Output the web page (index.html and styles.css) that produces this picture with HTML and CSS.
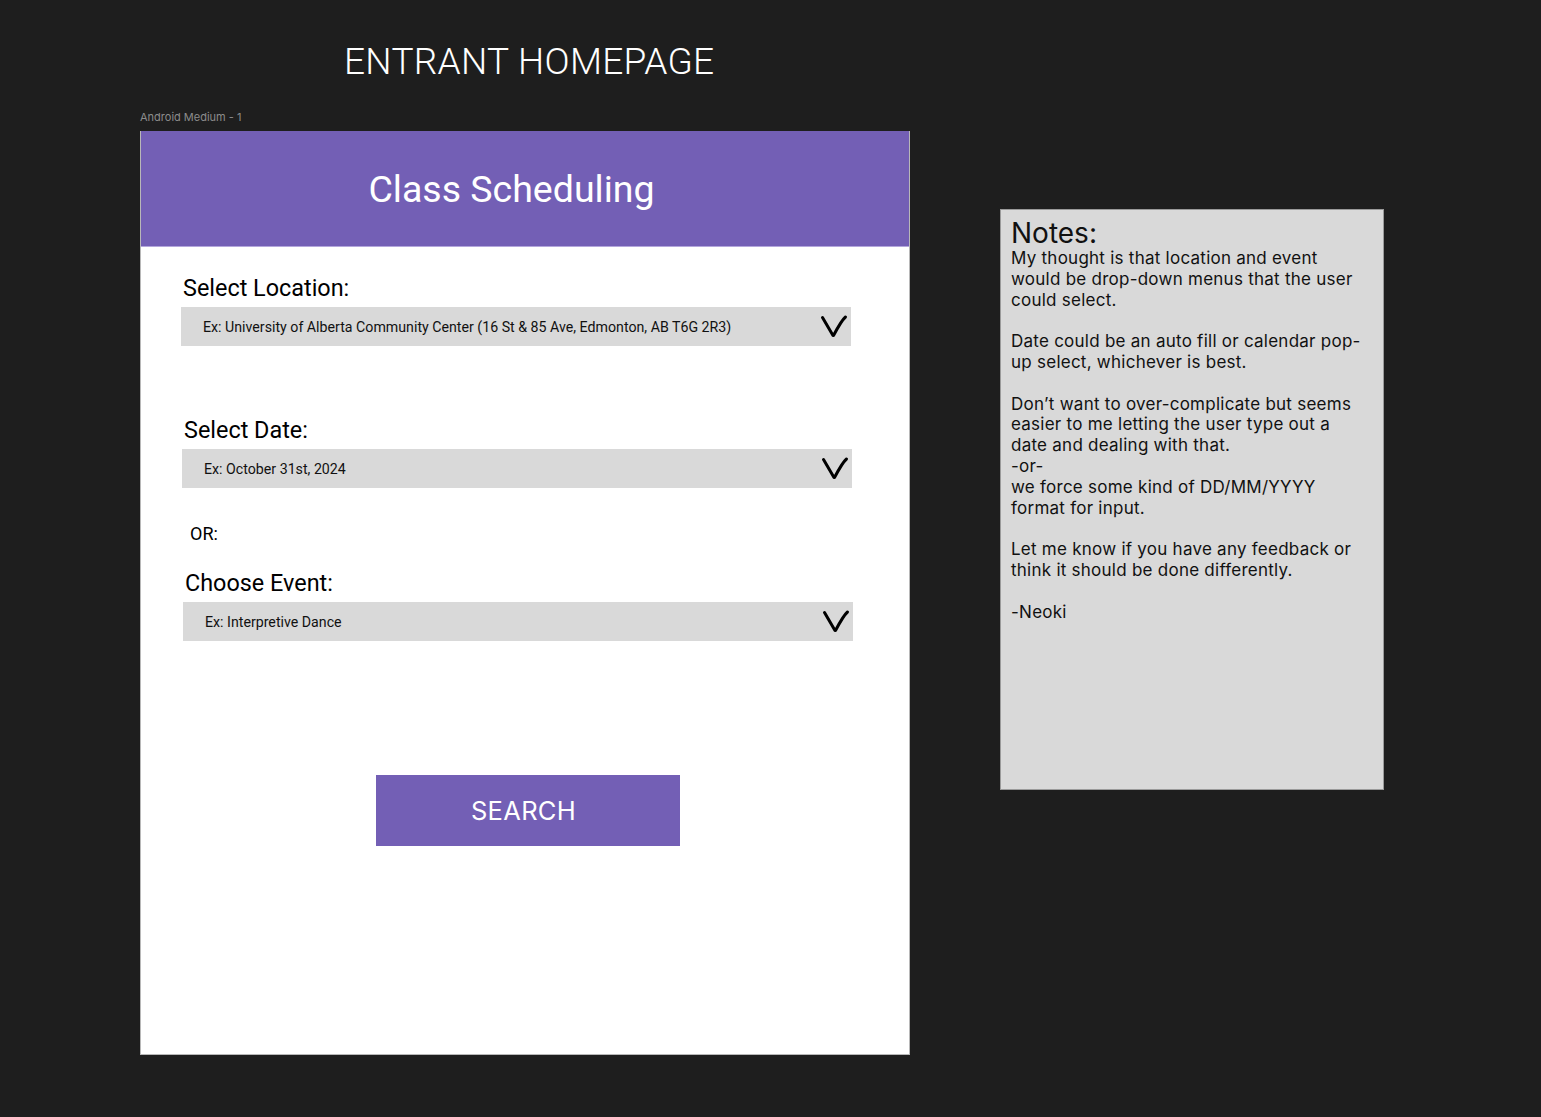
FILE: index.html
```html
<!DOCTYPE html>
<html>
<head>
<meta charset="utf-8">
<link rel="stylesheet" href="styles.css">
</head>
<body>
<div class="page">
  <h1 class="page-title">ENTRANT HOMEPAGE</h1>
  <div class="canvas">
    <div class="frame-col">
      <div class="frame-label">Android Medium - 1</div>
      <div class="frame">
        <div class="app-bar">Class Scheduling</div>
        <div class="form">
          <div class="field field-location">
            <div class="label">Select Location:</div>
            <div class="dropdown">
              <span>Ex: University of Alberta Community Center (16 St &amp; 85 Ave, Edmonton, AB T6G 2R3)</span>
              <svg class="chev" width="28" height="24" viewBox="0 0 28 24"><path d="M2.5 3.5 C4 6 8 13 13 21.5 L13.5 21.5 C18 13 22 6 25.5 3" fill="none" stroke="#000" stroke-width="3" stroke-linecap="round" stroke-linejoin="round"/></svg>
            </div>
          </div>
          <div class="field field-date">
            <div class="label">Select Date:</div>
            <div class="dropdown">
              <span>Ex: October 31st, 2024</span>
              <svg class="chev" width="28" height="24" viewBox="0 0 28 24"><path d="M2.5 3.5 C4 6 8 13 13 21.5 L13.5 21.5 C18 13 22 6 25.5 3" fill="none" stroke="#000" stroke-width="3" stroke-linecap="round" stroke-linejoin="round"/></svg>
            </div>
          </div>
          <div class="or">OR:</div>
          <div class="field field-event">
            <div class="label">Choose Event:</div>
            <div class="dropdown">
              <span>Ex: Interpretive Dance</span>
              <svg class="chev" width="28" height="24" viewBox="0 0 28 24"><path d="M2.5 3.5 C4 6 8 13 13 21.5 L13.5 21.5 C18 13 22 6 25.5 3" fill="none" stroke="#000" stroke-width="3" stroke-linecap="round" stroke-linejoin="round"/></svg>
            </div>
          </div>
          <div class="search-wrap">
            <button class="search">SEARCH</button>
          </div>
        </div>
      </div>
    </div>
    <div class="notes">
      <div class="notes-title">Notes:</div>
      <p>My thought is that location and event would be drop-down menus that the user could select.</p>
      <p>Date could be an auto fill or calendar pop-up select, whichever is best.</p>
      <p>Don’t want to over-complicate but seems easier to me letting the user type out a date and dealing with that.<br>-or-<br>we force some kind of DD/MM/YYYY format for input.</p>
      <p>Let me know if you have any feedback or think it should be done differently.</p>
      <p>-Neoki</p>
    </div>
  </div>
</div>
</body>
</html>
```

FILE: styles.css
```css
html, body {
  margin: 0;
  padding: 0;
  background: #1e1e1e;
  width: 1541px;
  height: 1117px;
  overflow: hidden;
}
.page {
  font-family: Roboto, "Liberation Sans", sans-serif;
}
.page-title {
  margin: 0;
  padding: 40px 0 0 344px;
  height: 44px;
  font-family: Roboto, sans-serif;
  font-weight: 300;
  font-size: 37px;
  line-height: 44px;
  color: #fff;
  letter-spacing: 0.3px;
}
.canvas {
  display: flex;
  align-items: flex-start;
  padding-left: 140px;
  margin-top: 26px;
}
.frame-col {
  width: 770px;
}
.frame-label {
  font-family: Inter, sans-serif;
  font-size: 11px;
  line-height: 14px;
  color: #8c8c8c;
  height: 21px;
}
.frame {
  background: #fff;
  height: 924px;
  box-sizing: border-box;
  border: 1px solid #b8b8b8;
  border-top: none;
}
.app-bar {
  height: 116px;
  background: #735fb5;
  border-bottom: 1px solid #b3a6dc;
  box-sizing: border-box;
  color: #fff;
  font-family: Roboto, sans-serif;
  font-size: 37.5px;
  display: flex;
  align-items: center;
  justify-content: center;
  padding-right: 27px;
  padding-top: 0;
}
.form {
  padding-left: 40px;
  padding-top: 27px;
}
.label {
  font-family: Roboto, sans-serif;
  font-size: 23.4px;
  line-height: 28px;
  color: #000;
  padding-left: 2px;
  margin-bottom: 5px;
}
.dropdown {
  width: 670px;
  height: 39px;
  background: #d9d9d9;
  display: flex;
  align-items: center;
  justify-content: space-between;
  box-sizing: border-box;
  padding-left: 22px;
  padding-right: 3px;
  font-family: Roboto, sans-serif;
  font-size: 14.2px;
  color: #111;
}
.chev {
  display: block;
  margin-top: -1px;
}
.field-date {
  margin-top: 70px;
  margin-left: 1px;
}
.or {
  font-family: Roboto, sans-serif;
  font-size: 18px;
  line-height: 20px;
  margin-top: 36px;
  margin-left: 9px;
}
.field-event {
  margin-top: 25px;
  margin-left: 2px;
}
.search-wrap {
  padding-left: 195px;
  padding-top: 134px;
}
.search {
  width: 304px;
  height: 71px;
  background: #735fb5;
  border: none;
  color: #fff;
  font-family: Inter, sans-serif;
  font-size: 25.5px;
  letter-spacing: 0.3px;
  padding: 0 9px 0 0;
  display: block;
}
.notes {
  margin-left: 90px;
  margin-top: 99px;
  width: 384px;
  height: 581px;
  box-sizing: border-box;
  background: #d9d9d9;
  border: 1px solid #9a9a9a;
  padding: 8px 16px 0 10px;
  font-family: Inter, sans-serif;
  color: #111;
  font-size: 17px;
  letter-spacing: 0.25px;
  line-height: 20.8px;
}
.notes-title {
  font-size: 28px;
  line-height: 30px;
  letter-spacing: 0;
}
.notes p {
  margin: 0 0 20.8px 0;
}
```
